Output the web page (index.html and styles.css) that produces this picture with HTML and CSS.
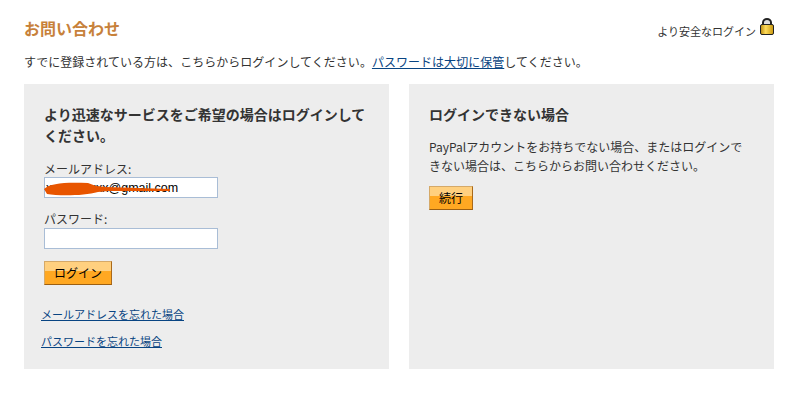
FILE: index.html
```html
<!DOCTYPE html>
<html lang="ja">
<head>
    <meta charset="UTF-8">
    <meta name="viewport" content="width=device-width, initial-scale=1.0">
    <title>お問い合わせ</title>
    <link rel="stylesheet" href="styles.css">
</head>
<body>
    <div class="container">
        <div class="page-head">
            <h1>お問い合わせ</h1>
            <div class="secure-login">
                <span>より安全なログイン</span>
                <svg class="lock-icon" width="14" height="17" viewBox="0 0 14 17">
                    <defs>
                        <linearGradient id="lockBody" x1="0" x2="1" y1="0" y2="0">
                            <stop offset="0" stop-color="#b98a10"/>
                            <stop offset="0.4" stop-color="#ffdc5a"/>
                            <stop offset="1" stop-color="#c8960f"/>
                        </linearGradient>
                    </defs>
                    <path d="M3 7V4.5a4 3.5 0 0 1 8 0V7" fill="#ddd" stroke="#222" stroke-width="2"/>
                    <rect x="0.5" y="6.5" width="13" height="10" rx="1.5" fill="url(#lockBody)" stroke="#222"/>
                </svg>
            </div>
        </div>

        <p class="intro">すでに登録されている方は、こちらからログインしてください。<a href="#">パスワードは大切に保管</a>してください。</p>

        <div class="panels">
            <div class="panel">
                <h2>より迅速なサービスをご希望の場合はログインしてください。</h2>
                <label class="field-label" for="email">メールアドレス:</label>
                <div class="email-wrap">
                    <input type="text" id="email" value="xxxxxxxxxx@gmail.com">
                    <svg class="scribble" width="128" height="14" viewBox="0 0 128 14">
                        <path d="M0 7 C6 1 22 0 44 1 L52 4 L62 5 L126 7 L126 9 L64 9 L54 10 C40 14 14 14 3 12 Z" fill="#e85500"/>
                    </svg>
                </div>
                <label class="field-label second" for="password">パスワード:</label>
                <input type="password" id="password">
                <button class="btn login-btn">ログイン</button>
                <div class="help-links">
                    <a href="#">メールアドレスを忘れた場合</a>
                    <a href="#">パスワードを忘れた場合</a>
                </div>
            </div>
            <div class="panel">
                <h2>ログインできない場合</h2>
                <p class="panel-text">PayPalアカウントをお持ちでない場合、またはログインできない場合は、こちらからお問い合わせください。</p>
                <button class="btn">続行</button>
            </div>
        </div>
    </div>
</body>
</html>
```

FILE: styles.css
```css
body {
    font-family: "Noto Sans CJK JP", "Liberation Sans", sans-serif;
    font-size: 12px;
    margin: 0;
    background-color: #fff;
    color: #333;
}

.container {
    padding: 16px 12px 0 24px;
}

.page-head {
    display: flex;
    justify-content: space-between;
    align-items: flex-end;
    height: 24px;
}

h1 {
    margin: 0;
    font-size: 16px;
    line-height: 24px;
    color: #c7813a;
}

.secure-login {
    display: flex;
    align-items: flex-end;
    gap: 4px;
    font-size: 11px;
    line-height: 16px;
}

.secure-login span {
    margin-bottom: 1px;
}

.lock-icon {
    display: block;
    margin-bottom: 5px;
}

.intro {
    margin: 14px 0 0;
    line-height: 16px;
    letter-spacing: 0.03px;
}

a {
    color: #084482;
}

.panels {
    display: flex;
    gap: 20px;
    margin-top: 14px;
}

.panel {
    box-sizing: border-box;
    width: 365px;
    height: 285px;
    padding: 20px;
    background-color: #ededed;
}

h2 {
    margin: 0;
    font-size: 14px;
    line-height: 21px;
    color: #333;
}

.field-label {
    display: block;
    margin-top: 15px;
    line-height: 16px;
}

.field-label.second {
    margin-top: 13px;
    margin-bottom: 1px;
}

input {
    display: block;
    box-sizing: border-box;
    width: 174px;
    height: 21px;
    padding: 0 1px;
    border: 1px solid #a9bdd6;
    background-color: #fff;
    font-family: "Liberation Sans", sans-serif;
    font-size: 12.5px;
    color: #000;
    outline: none;
}

.email-wrap {
    position: relative;
    width: 174px;
}

.scribble {
    position: absolute;
    left: 0;
    top: 5px;
}

.btn {
    display: block;
    box-sizing: border-box;
    min-width: 44px;
    height: 24px;
    padding: 0 8px 2px;
    border: 1px solid #d5a968;
    border-right-color: #a9691a;
    border-bottom: 1px solid #9c5f12;
    background: linear-gradient(to bottom, #ffd07f 0, #ffd07f 43%, #ffa822 43%, #ffa822 100%);
    font-family: inherit;
    font-size: 12px;
    color: #000;
    cursor: pointer;
}

.login-btn {
    width: 68px;
    margin-top: 12px;
}

.help-links {
    display: flex;
    flex-direction: column;
    gap: 11px;
    margin: 21px 0 0 -3px;
    font-size: 11px;
}

.help-links a {
    line-height: 16px;
}

.panel-text {
    margin: 12px 0 0;
    line-height: 19px;
}

.panel-text + .btn {
    margin-top: 11px;
}
```
